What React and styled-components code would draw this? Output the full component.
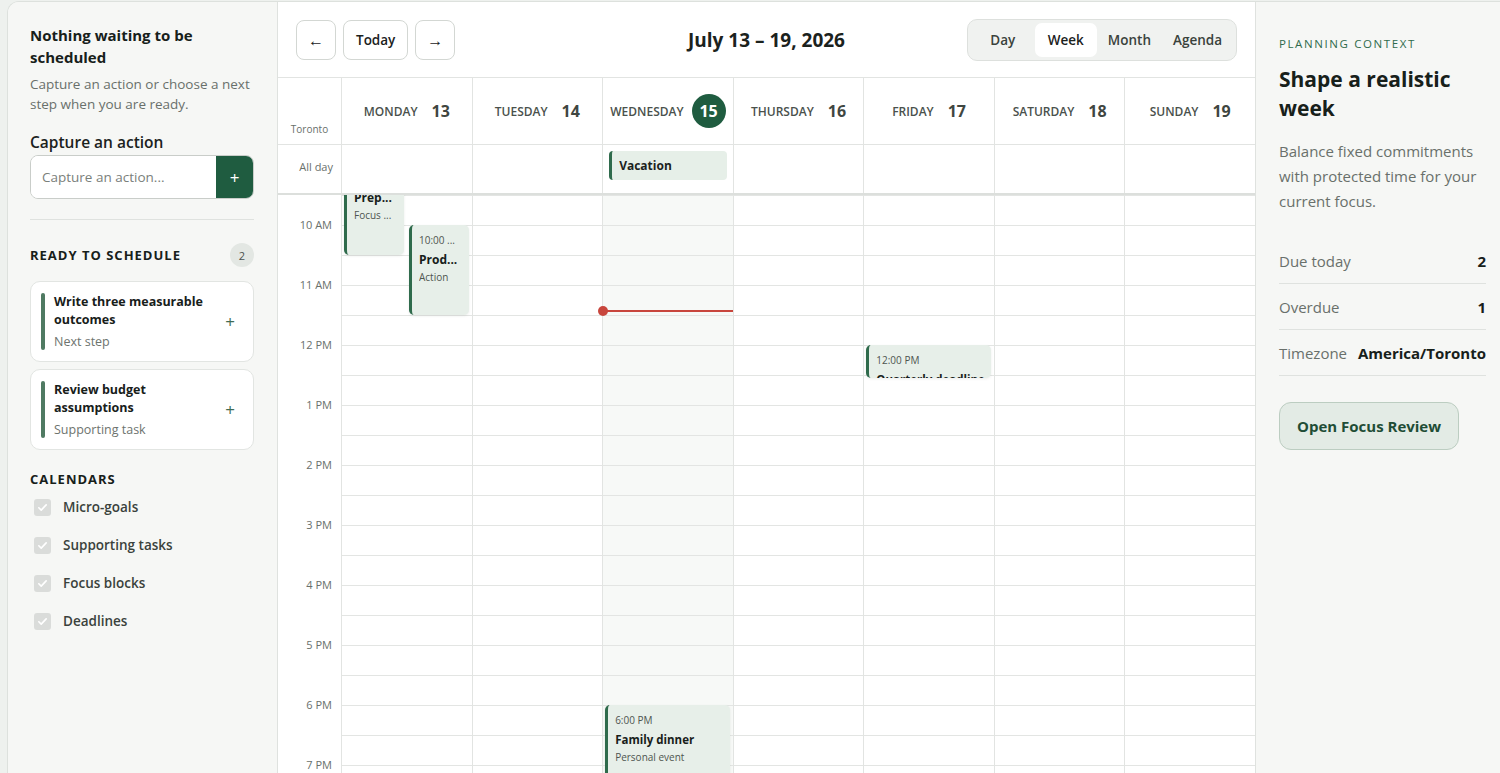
import React, { useLayoutEffect, useRef } from 'react';
import styled, { createGlobalStyle } from 'styled-components';

const GlobalStyle = createGlobalStyle`
    html, body {
        margin: 0;
        padding: 0;
        background: #eef1ee;
        overflow: hidden;
    }
    body {
        font-family: 'Open Sans', 'Noto Sans', sans-serif;
        color: #1b221d;
    }
    * { box-sizing: border-box; }
`;

const Shell = styled.div`
    display: grid;
    grid-template-columns: 270px 978px 252px;
    width: 1500px;
    height: 772px;
    margin: 1px 0 0 7px;
    border-top: 1px solid #dde1dd;
    border-left: 1px solid #dde1dd;
    border-top-left-radius: 12px;
    overflow: hidden;
    background: #f6f7f5;
`;

/* ---------- left sidebar ---------- */
const Sidebar = styled.aside`
    padding: 22px 23px 0 22px;
    border-right: 1px solid #dfe2df;
    background: #f6f7f5;
`;
const EmptyTitle = styled.h2`
    margin: 0;
    font-size: 15px;
    line-height: 22px;
    font-weight: 700;
    color: #17201a;
`;
const Muted = styled.p`
    margin: 6px 0 0;
    font-size: 13.5px;
    line-height: 20px;
    color: #69706b;
`;
const FieldLabel = styled.label`
    display: block;
    margin-top: 17px;
    font-size: 15.5px;
    font-weight: 600;
    color: #1b221d;
`;
const InputRow = styled.div`
    display: flex;
    margin-top: 2px;
    height: 44px;
    border: 1px solid #c9cdc9;
    border-radius: 8px;
    overflow: hidden;
    background: #fff;
`;
const TextInput = styled.input`
    flex: 1;
    min-width: 0;
    border: 0;
    padding: 0 11px;
    font-family: inherit;
    font-size: 13.5px;
    color: #1b221d;
    outline: none;
    &::placeholder { color: #7a807b; }
`;
const AddButton = styled.button`
    width: 37px;
    border: 0;
    background: #1f5c40;
    color: #fff;
    font-size: 17px;
    font-family: inherit;
    padding: 0;
`;
const Divider = styled.hr`
    margin: 20px 0 0;
    border: 0;
    border-top: 1px solid #dfe2df;
`;
const SectionHead = styled.div`
    display: flex;
    align-items: center;
    justify-content: space-between;
    margin-top: ${(p) => p.$top || 23}px;
    font-size: 13px;
    font-weight: 700;
    letter-spacing: 1px;
    color: #17201a;
`;
const Count = styled.span`
    display: grid;
    place-items: center;
    width: 24px;
    height: 24px;
    border-radius: 50%;
    background: #e3e7e3;
    font-size: 11px;
    font-weight: 400;
    letter-spacing: 0;
    color: #4b524d;
`;
const TaskList = styled.div`
    display: flex;
    flex-direction: column;
    gap: 7px;
    margin-top: 14px;
`;
const TaskCard = styled.div`
    display: flex;
    align-items: center;
    gap: 9px;
    padding: 11px 18px 11px 10px;
    border: 1px solid #e2e5e2;
    border-radius: 10px;
    background: #fff;
`;
const TaskBar = styled.span`
    align-self: stretch;
    width: 4px;
    border-radius: 2px;
    background: #4f7a62;
`;
const TaskBody = styled.div`
    flex: 1;
`;
const TaskTitle = styled.div`
    font-size: 12.5px;
    line-height: 18px;
    font-weight: 700;
    color: #17201a;
`;
const TaskSub = styled.div`
    margin-top: 4px;
    font-size: 12.5px;
    color: #6d736e;
`;
const TaskPlus = styled.span`
    font-size: 17px;
    color: #3f6b54;
`;
const CalList = styled.div`
    display: flex;
    flex-direction: column;
    gap: 20px;
    margin-top: 10px;
    padding-left: 4px;
`;
const CalItem = styled.label`
    display: flex;
    align-items: center;
    gap: 12px;
    font-size: 13.5px;
    font-weight: 600;
    color: #3a423c;
`;
const Check = styled.span`
    display: grid;
    place-items: center;
    width: 17px;
    height: 17px;
    border-radius: 3px;
    background: #dadcda;
`;

/* ---------- center calendar ---------- */
const Main = styled.main`
    display: flex;
    flex-direction: column;
    min-height: 0;
    background: #fff;
    border-right: 1px solid #dfe2df;
`;
const Toolbar = styled.div`
    display: grid;
    grid-template-columns: 1fr auto 1fr;
    align-items: center;
    flex: 0 0 76px;
    padding: 0 18px 0 18px;
    border-bottom: 1px solid #e2e4e2;
`;
const NavGroup = styled.div`
    display: flex;
    gap: 7px;
`;
const NavButton = styled.button`
    height: 40px;
    min-width: 40px;
    padding: 0 ${(p) => (p.$wide ? 12 : 0)}px;
    border: 1px solid #d3d7d3;
    border-radius: 8px;
    background: #fff;
    font-family: inherit;
    font-size: ${(p) => (p.$wide ? 13.5 : 16)}px;
    font-weight: 600;
    color: #1b221d;
`;
const RangeTitle = styled.h1`
    margin: 0;
    font-size: 19px;
    font-weight: 700;
    color: #1b221d;
`;
const Segments = styled.div`
    justify-self: end;
    display: flex;
    padding: 3px;
    border: 1px solid #dde0dd;
    border-radius: 10px;
    background: #f0f2f0;
`;
const Segment = styled.button`
    height: 34px;
    padding: 0 11px;
    border: 0;
    border-radius: 7px;
    background: ${(p) => (p.$active ? '#fff' : 'transparent')};
    font-family: inherit;
    font-size: 13.5px;
    font-weight: 600;
    color: ${(p) => (p.$active ? '#1b221d' : '#3a423c')};
    min-width: ${(p) => p.$w}px;
`;

const Columns = styled.div`
    display: grid;
    grid-template-columns: 63px repeat(7, 1fr);
`;
const HeadRow = styled(Columns)`
    flex: 0 0 67px;
    border-bottom: 1px solid #e2e4e2;
`;
const AllDayRow = styled(Columns)`
    flex: 0 0 50px;
    border-bottom: 2px solid #dcdfdc;
`;
const Gutter = styled.div`
    display: flex;
    align-items: ${(p) => p.$align || 'center'};
    justify-content: ${(p) => p.$justify || 'center'};
    padding: ${(p) => p.$pad || '0'};
    font-size: ${(p) => p.$size || 11}px;
    color: #69706b;
`;
const DayHead = styled.div`
    display: flex;
    align-items: center;
    justify-content: center;
    gap: ${(p) => (p.$today ? 8 : 14)}px;
    border-left: 1px solid #e2e4e2;
`;
const DayName = styled.span`
    font-size: 12px;
    font-weight: 600;
    color: #4a514c;
`;
const DayNum = styled.span`
    display: grid;
    place-items: center;
    min-width: ${(p) => (p.$today ? '34px' : '0')};
    height: 34px;
    border-radius: 50%;
    background: ${(p) => (p.$today ? '#1f5c40' : 'transparent')};
    font-size: 16px;
    font-weight: 700;
    color: ${(p) => (p.$today ? '#fff' : '#3f4641')};
`;
const AllDayCell = styled.div`
    padding: 6px 6px 0 6px;
    border-left: 1px solid #e2e4e2;
`;
const Chip = styled.div`
    height: 29px;
    padding: 0 7px;
    display: flex;
    align-items: center;
    border-left: 3px solid #2f6b4c;
    border-radius: 4px;
    background: #e6efe8;
    font-size: 12px;
    font-weight: 700;
    color: #1b221d;
`;

const Scroller = styled.div`
    flex: 1;
    min-height: 0;
    overflow-y: auto;
    scrollbar-width: none;
    &::-webkit-scrollbar { display: none; }
`;
const TimeGrid = styled(Columns)`
    height: 1440px;
`;
const HourCol = styled.div`
    display: flex;
    flex-direction: column;
`;
const HourLabel = styled.div`
    height: 60px;
    padding-right: 9px;
    text-align: right;
    font-size: 11px;
    line-height: 16px;
    color: #69706b;
    transform: translateY(-8px);
`;
const DayCol = styled.div`
    position: relative;
    border-left: 1px solid #e2e4e2;
    background-color: ${(p) => (p.$today ? '#f7f9f7' : '#fff')};
    background-image: linear-gradient(to bottom, #e3e5e3 1px, transparent 1px);
    background-size: 100% 30px;
`;
const Event = styled.div`
    position: absolute;
    overflow: hidden;
    padding: ${(p) => (p.$compact ? '6px 5px 6px 7px' : '8px 5px 8px 7px')};
    border-left: 3px solid #2f6b4c;
    border-radius: 5px;
    background: #e7efe9;
    box-shadow: 0 1px 3px rgba(20, 40, 30, 0.08);
`;
const EvTime = styled.div`
    font-size: 10px;
    line-height: 14px;
    color: #4e5550;
    white-space: nowrap;
    overflow: hidden;
    text-overflow: ellipsis;
`;
const EvTitle = styled.div`
    margin-top: 4px;
    font-size: ${(p) => (p.$small ? 12 : 11.5)}px;
    line-height: 17px;
    font-weight: 700;
    color: #17201a;
    white-space: nowrap;
    overflow: hidden;
    text-overflow: ellipsis;
`;
const EvSub = styled.div`
    margin-top: 2px;
    font-size: 10px;
    line-height: 14px;
    color: #4e5550;
    white-space: nowrap;
    overflow: hidden;
    text-overflow: ellipsis;
`;
const NowLine = styled.div`
    position: absolute;
    left: 0;
    right: 0;
    height: 2px;
    background: #c8463d;
    &::before {
        content: '';
        position: absolute;
        left: -5px;
        top: -4px;
        width: 10px;
        height: 10px;
        border-radius: 50%;
        background: #c8463d;
    }
`;

/* ---------- right panel ---------- */
const Context = styled.aside`
    padding: 34px 22px 0 23px;
    background: #f6f7f5;
`;
const Eyebrow = styled.div`
    font-size: 11.5px;
    letter-spacing: 1.6px;
    color: #2f6b4c;
`;
const ContextTitle = styled.h2`
    margin: 14px 0 0;
    font-size: 21px;
    line-height: 29px;
    font-weight: 700;
    color: #17201a;
`;
const ContextText = styled.p`
    margin: 16px 0 0;
    font-size: 15px;
    line-height: 25px;
    color: #69706b;
`;
const Stats = styled.div`
    margin-top: 24px;
`;
const StatRow = styled.div`
    display: flex;
    justify-content: space-between;
    align-items: center;
    gap: 10px;
    height: 46px;
    padding-top: 1px;
    border-bottom: 1px solid #dfe2df;
    white-space: nowrap;
`;
const StatLabel = styled.span`
    font-size: 15px;
    color: #69706b;
`;
const StatValue = styled.span`
    font-size: 15px;
    font-weight: 700;
    color: #17201a;
`;
const ReviewButton = styled.button`
    margin-top: 26px;
    height: 48px;
    padding: 0 17px;
    border: 1px solid #bccdc1;
    border-radius: 12px;
    background: #e3ebe5;
    font-family: inherit;
    font-size: 15px;
    font-weight: 700;
    color: #1f4d36;
`;

const days = [
    { name: 'Monday', num: 13 },
    { name: 'Tuesday', num: 14 },
    { name: 'Wednesday', num: 15, today: true },
    { name: 'Thursday', num: 16 },
    { name: 'Friday', num: 17 },
    { name: 'Saturday', num: 18 },
    { name: 'Sunday', num: 19 },
];

const hours = Array.from({ length: 24 }, (_, h) => {
    if (h === 0) return '';
    const n = h % 12 === 0 ? 12 : h % 12;
    return `${n} ${h < 12 ? 'AM' : 'PM'}`;
});

// events: day index, start/end in hours, left/width in px inside column
const events = [
    { day: 0, start: 9, end: 10.5, left: 2, width: 60, time: '9:00 AM', title: 'Prep...', sub: 'Focus ...', compact: true, narrow: true },
    { day: 0, start: 10, end: 11.5, left: 67, width: 60, time: '10:00 ...', title: 'Prod...', sub: 'Action', narrow: true },
    { day: 4, start: 12, end: 12.55, left: 2, width: 125, time: '12:00 PM', title: 'Quarterly deadline', sub: 'Deadline' },
    { day: 2, start: 18, end: 19.5, left: 2, width: 125, time: '6:00 PM', title: 'Family dinner', sub: 'Personal event' },
];

const tasks = [
    { title: 'Write three measurable outcomes', sub: 'Next step' },
    { title: 'Review budget assumptions', sub: 'Supporting task' },
];

const calendars = ['Micro-goals', 'Supporting tasks', 'Focus blocks', 'Deadlines'];

const CheckMark = () => (
    <svg width='11' height='11' viewBox='0 0 12 12'>
        <path d='M2 6.3l2.6 2.5L10 3.2' fill='none' stroke='#fff' strokeWidth='1.8' strokeLinecap='round' strokeLinejoin='round' />
    </svg>
);

const HOUR = 60;

function App() {
    const scrollRef = useRef(null);

    useLayoutEffect(() => {
        // start the view at 9:30
        if (scrollRef.current) scrollRef.current.scrollTop = 9.5 * HOUR;
    }, []);

    const now = 11 + 26 / 60;

    return (
        <>
            <GlobalStyle />
            <Shell>
                <Sidebar>
                    <EmptyTitle>Nothing waiting to be scheduled</EmptyTitle>
                    <Muted>Capture an action or choose a next step when you are ready.</Muted>
                    <FieldLabel htmlFor='capture'>Capture an action</FieldLabel>
                    <InputRow>
                        <TextInput id='capture' placeholder='Capture an action...' />
                        <AddButton>+</AddButton>
                    </InputRow>
                    <Divider />
                    <SectionHead>
                        READY TO SCHEDULE
                        <Count>2</Count>
                    </SectionHead>
                    <TaskList>
                        {tasks.map((t) => (
                            <TaskCard key={t.title}>
                                <TaskBar />
                                <TaskBody>
                                    <TaskTitle>{t.title}</TaskTitle>
                                    <TaskSub>{t.sub}</TaskSub>
                                </TaskBody>
                                <TaskPlus>+</TaskPlus>
                            </TaskCard>
                        ))}
                    </TaskList>
                    <SectionHead $top={20}>CALENDARS</SectionHead>
                    <CalList>
                        {calendars.map((c) => (
                            <CalItem key={c}>
                                <Check>
                                    <CheckMark />
                                </Check>
                                {c}
                            </CalItem>
                        ))}
                    </CalList>
                </Sidebar>

                <Main>
                    <Toolbar>
                        <NavGroup>
                            <NavButton>←</NavButton>
                            <NavButton $wide>Today</NavButton>
                            <NavButton>→</NavButton>
                        </NavGroup>
                        <RangeTitle>July 13 – 19, 2026</RangeTitle>
                        <Segments>
                            <Segment $w={64}>Day</Segment>
                            <Segment $w={62} $active>Week</Segment>
                            <Segment $w={62}>Month</Segment>
                            <Segment $w={70}>Agenda</Segment>
                        </Segments>
                    </Toolbar>

                    <HeadRow>
                        <Gutter $align='flex-end' $pad='0 0 8px' $size={10}>Toronto</Gutter>
                        {days.map((d) => (
                            <DayHead key={d.name} $today={d.today}>
                                <DayName>{d.name.toUpperCase()}</DayName>
                                <DayNum $today={d.today}>{d.num}</DayNum>
                            </DayHead>
                        ))}
                    </HeadRow>

                    <AllDayRow>
                        <Gutter $justify='flex-end' $pad='0 8px 6px 0'>All day</Gutter>
                        {days.map((d) => (
                            <AllDayCell key={d.name}>
                                {d.today && <Chip>Vacation</Chip>}
                            </AllDayCell>
                        ))}
                    </AllDayRow>

                    <Scroller ref={scrollRef}>
                        <TimeGrid>
                            <HourCol>
                                {hours.map((h, i) => (
                                    <HourLabel key={i}>{h}</HourLabel>
                                ))}
                            </HourCol>
                            {days.map((d, di) => (
                                <DayCol key={d.name} $today={d.today}>
                                    {events
                                        .filter((e) => e.day === di)
                                        .map((e) => (
                                            <Event
                                                key={e.title}
                                                $compact={e.compact}
                                                style={{
                                                    top: e.start * HOUR,
                                                    height: (e.end - e.start) * HOUR,
                                                    left: e.left,
                                                    width: e.width,
                                                }}>
                                                <EvTime>{e.time}</EvTime>
                                                <EvTitle $small={e.narrow}>{e.title}</EvTitle>
                                                <EvSub>{e.sub}</EvSub>
                                            </Event>
                                        ))}
                                    {d.today && <NowLine style={{ top: now * HOUR - 1 }} />}
                                </DayCol>
                            ))}
                        </TimeGrid>
                    </Scroller>
                </Main>

                <Context>
                    <Eyebrow>PLANNING CONTEXT</Eyebrow>
                    <ContextTitle>Shape a realistic week</ContextTitle>
                    <ContextText>Balance fixed commitments with protected time for your current focus.</ContextText>
                    <Stats>
                        <StatRow>
                            <StatLabel>Due today</StatLabel>
                            <StatValue>2</StatValue>
                        </StatRow>
                        <StatRow>
                            <StatLabel>Overdue</StatLabel>
                            <StatValue>1</StatValue>
                        </StatRow>
                        <StatRow>
                            <StatLabel>Timezone</StatLabel>
                            <StatValue>America/Toronto</StatValue>
                        </StatRow>
                    </Stats>
                    <ReviewButton>Open Focus Review</ReviewButton>
                </Context>
            </Shell>
        </>
    );
}

export default App;
